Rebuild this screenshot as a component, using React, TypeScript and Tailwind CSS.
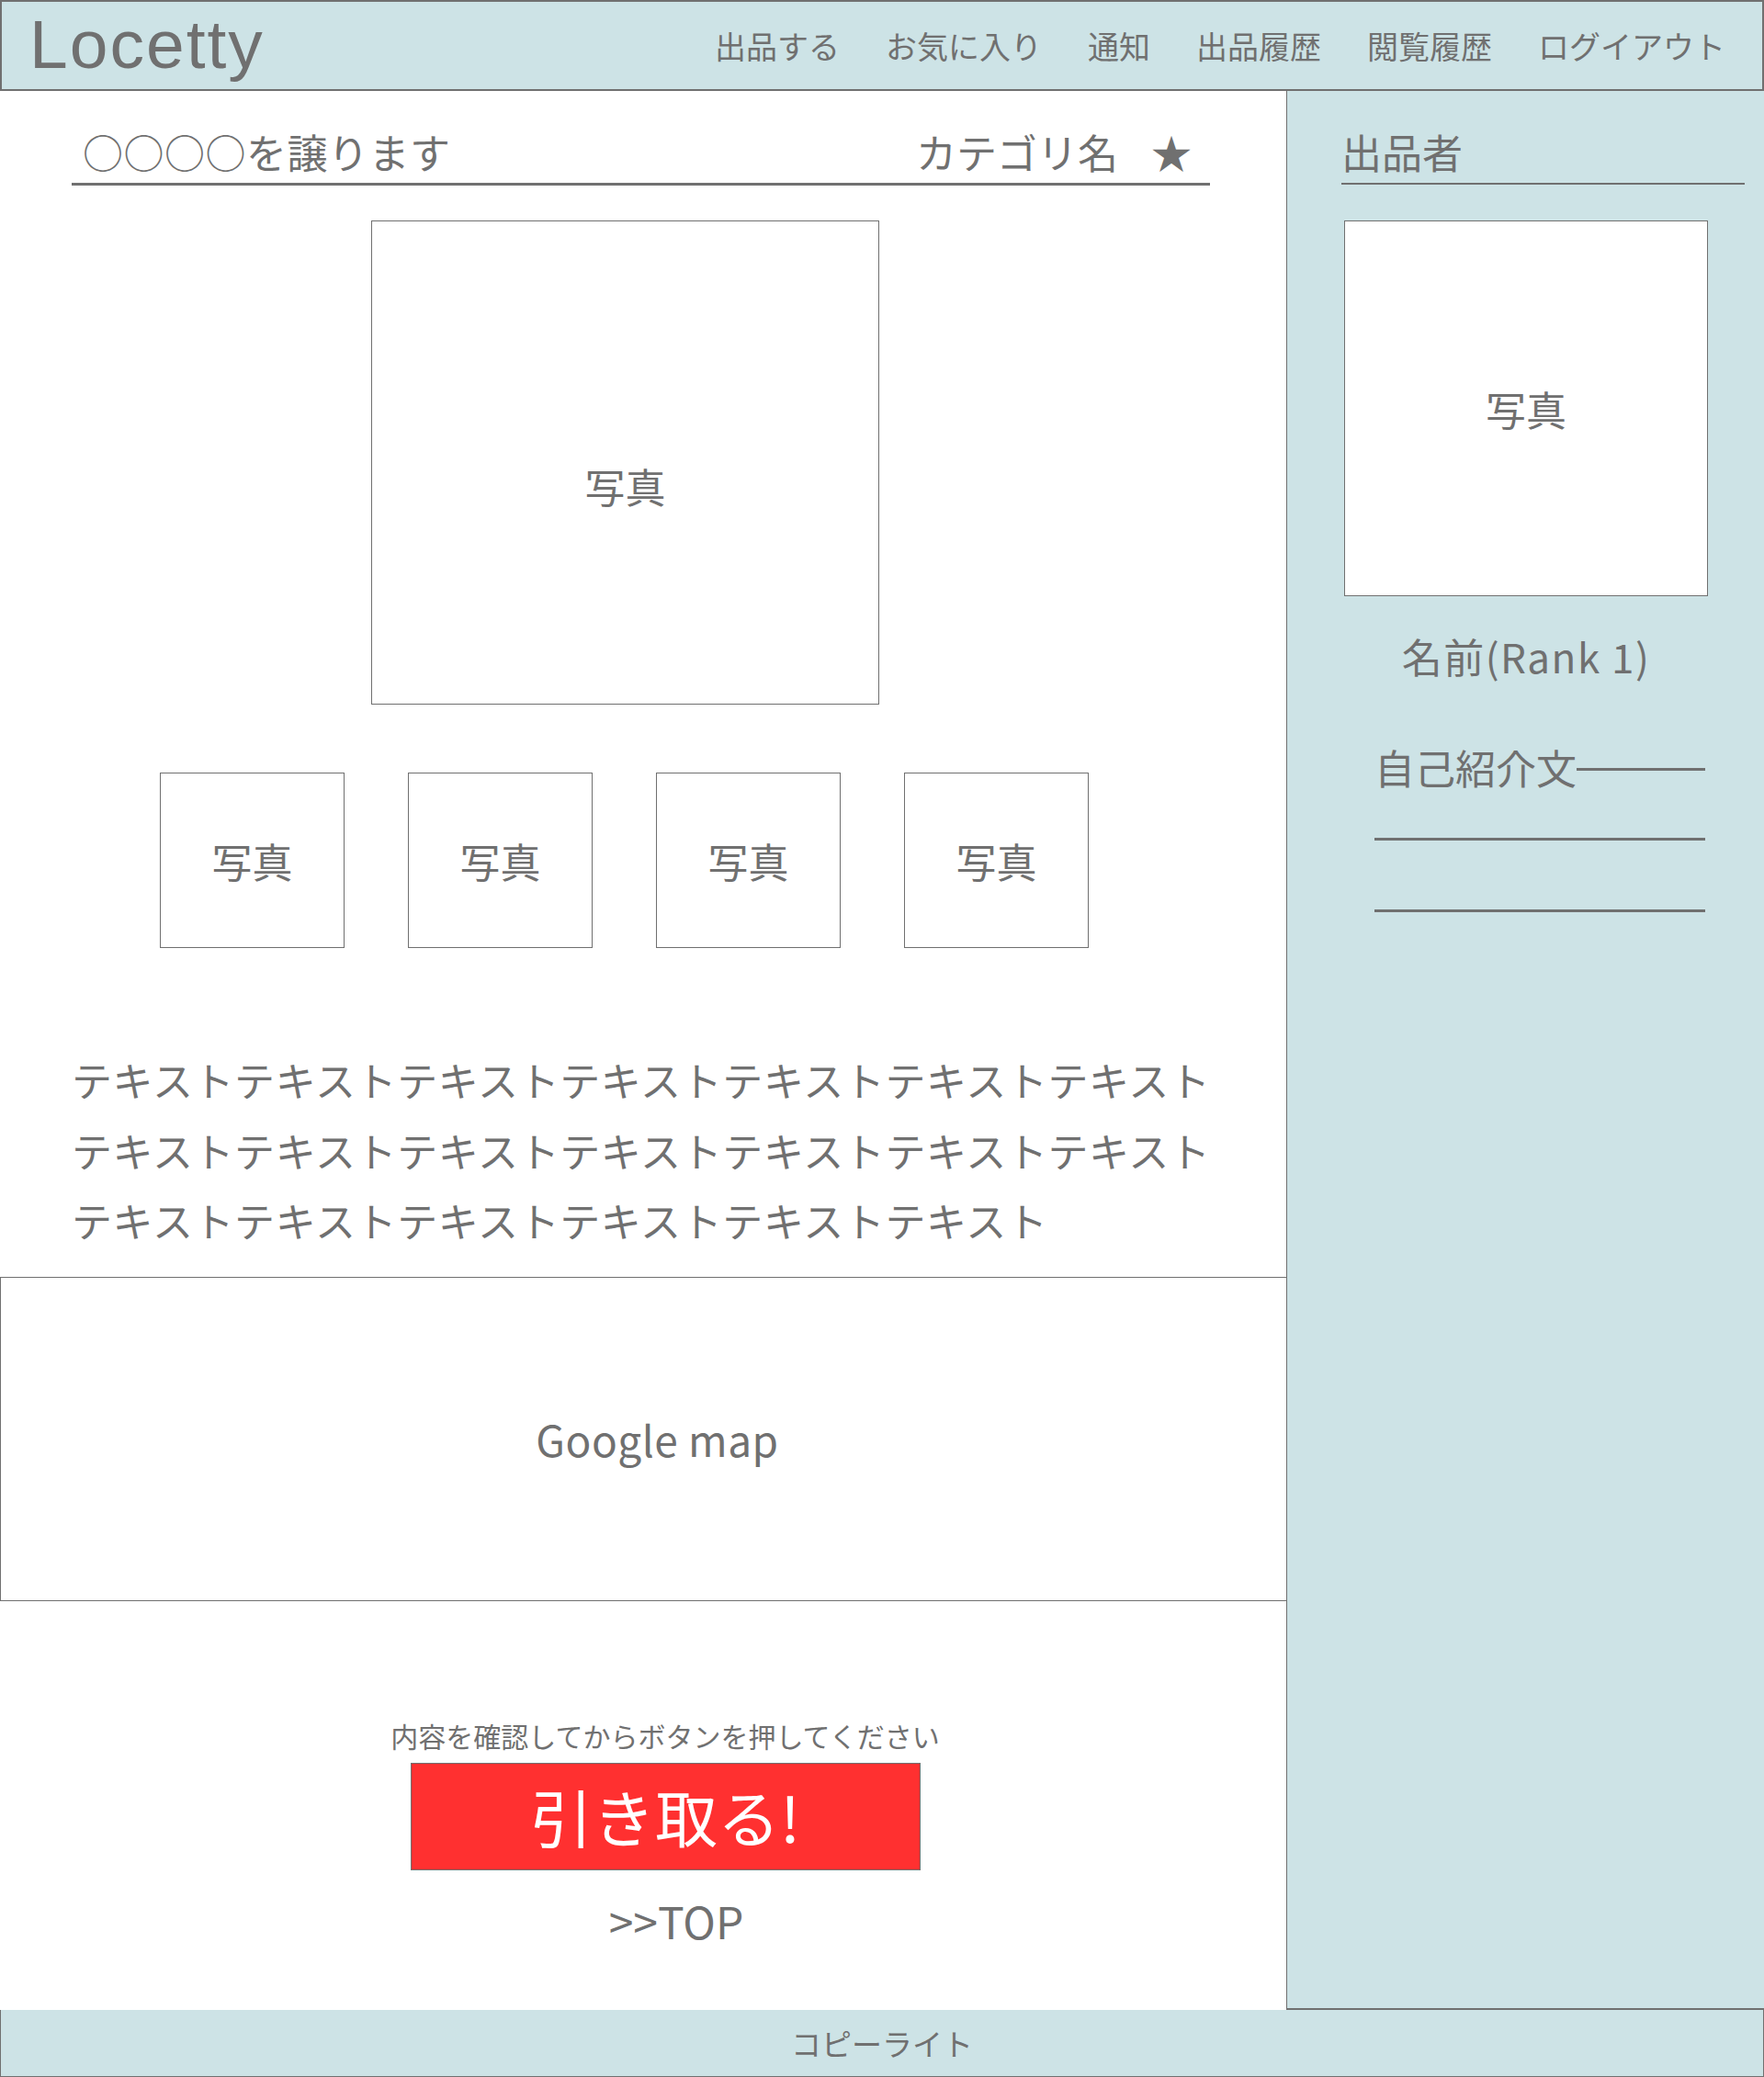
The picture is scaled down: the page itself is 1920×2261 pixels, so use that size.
import React from "react";

const photoBox =
  "flex items-center justify-center border border-[#707070] bg-white text-[44px] leading-none";

function Photo({ className }: { className: string }) {
  return (
    <div className={`${photoBox} ${className}`}>
      <span>写真</span>
    </div>
  );
}

export default function App() {
  const navItems = ["出品する", "お気に入り", "通知", "出品履歴", "閲覧履歴", "ログイアウト"];
  const lines = [
    "テキストテキストテキストテキストテキストテキストテキスト",
    "テキストテキストテキストテキストテキストテキストテキスト",
    "テキストテキストテキストテキストテキストテキスト",
  ];

  return (
    <div className="w-[1920px] h-[2261px] flex flex-col bg-white text-[#707070] font-['Noto_Sans_CJK_JP','Noto_Sans',sans-serif]">
      {/* header */}
      <header className="h-[99px] shrink-0 flex items-center justify-between border-2 border-[#707070] bg-[#cde3e6] pl-[30px] pr-[40px]">
        <div className="font-['Liberation_Sans',sans-serif] text-[75px] leading-[82px] tracking-[2px] mb-[4px]">
          Locetty
        </div>
        <nav className="flex items-center gap-[50px] text-[34px] leading-none">
          {navItems.map((item) => (
            <span key={item}>{item}</span>
          ))}
        </nav>
      </header>

      <div className="flex h-[2089px] shrink-0">
        {/* main */}
        <main className="w-[1400px] shrink-0 flex flex-col">
          <div className="ml-[78px] w-[1239px] mt-[31px] h-[72px] flex items-center justify-between border-b-[3px] border-[#707070] pl-[12px] pr-[20px] text-[44px] leading-none">
            <span className="tracking-[0.5px]">○○○○を譲ります</span>
            <div className="flex items-center gap-[36px]">
              <span>カテゴリ名</span>
              <span>★</span>
            </div>
          </div>

          <Photo className="ml-[404px] mt-[38px] w-[553px] h-[527px] pt-[50px]" />

          <div className="ml-[174px] mt-[74px] flex gap-[69px]">
            <Photo className="w-[201px] h-[191px]" />
            <Photo className="w-[201px] h-[191px]" />
            <Photo className="w-[201px] h-[191px]" />
            <Photo className="w-[201px] h-[191px]" />
          </div>

          <div className="ml-[78px] mt-[105px] text-[44px] leading-[76.5px] tracking-[0.6px] whitespace-nowrap">
            {lines.map((l, i) => (
              <p key={i}>{l}</p>
            ))}
          </div>

          <div className="mt-[23px] h-[353px] flex items-center justify-center border border-r-0 border-[#707070] pl-[30px] text-[46px] leading-none tracking-[0.5px]">
            Google map
          </div>

          <div className="w-[1448px] flex flex-col items-center">
            <p className="mt-[126px] text-[30px] leading-[40px]">
              内容を確認してからボタンを押してください
            </p>
            <button className="mt-[10px] w-[555px] h-[117px] flex items-center justify-center border border-[#707070] bg-[#ff3030] text-white text-[68px] leading-none">
              引き取る!
            </button>
            <a className="mt-[24px] ml-[24px] text-[48px] leading-[60px]">&gt;&gt;TOP</a>
          </div>
        </main>

        {/* sidebar */}
        <aside className="flex-1 flex flex-col bg-[#cde3e6] border-l border-b-2 border-[#707070]">
          <div className="ml-[59px] w-[439px] mt-[31px] h-[71px] flex items-center border-b-2 border-[#707070] text-[44px] leading-none">
            出品者
          </div>
          <Photo className="ml-[62px] mt-[39px] w-[396px] h-[409px]" />
          <div className="ml-[62px] w-[396px] mt-[32px] h-[66px] flex items-center justify-center text-[44px] leading-none tracking-[1.5px]">
            名前(Rank 1)
          </div>
          <div className="ml-[95px] w-[360px] mt-[49px] flex flex-col text-[44px] leading-none">
            <div className="h-[78px] flex items-center">
              <span className="whitespace-nowrap">自己紹介文</span>
              <div className="flex-1 h-[3px] bg-[#707070] mt-[4px]" />
            </div>
            <div className="h-[78px] flex items-center">
              <div className="flex-1 h-[3px] bg-[#707070]" />
            </div>
            <div className="h-[78px] flex items-center">
              <div className="flex-1 h-[3px] bg-[#707070]" />
            </div>
          </div>
        </aside>
      </div>

      {/* footer */}
      <footer className="h-[73px] shrink-0 flex items-center justify-center border border-t-0 border-[#707070] bg-[#cde3e6] text-[33px] leading-none">
        コピーライト
      </footer>
    </div>
  );
}
